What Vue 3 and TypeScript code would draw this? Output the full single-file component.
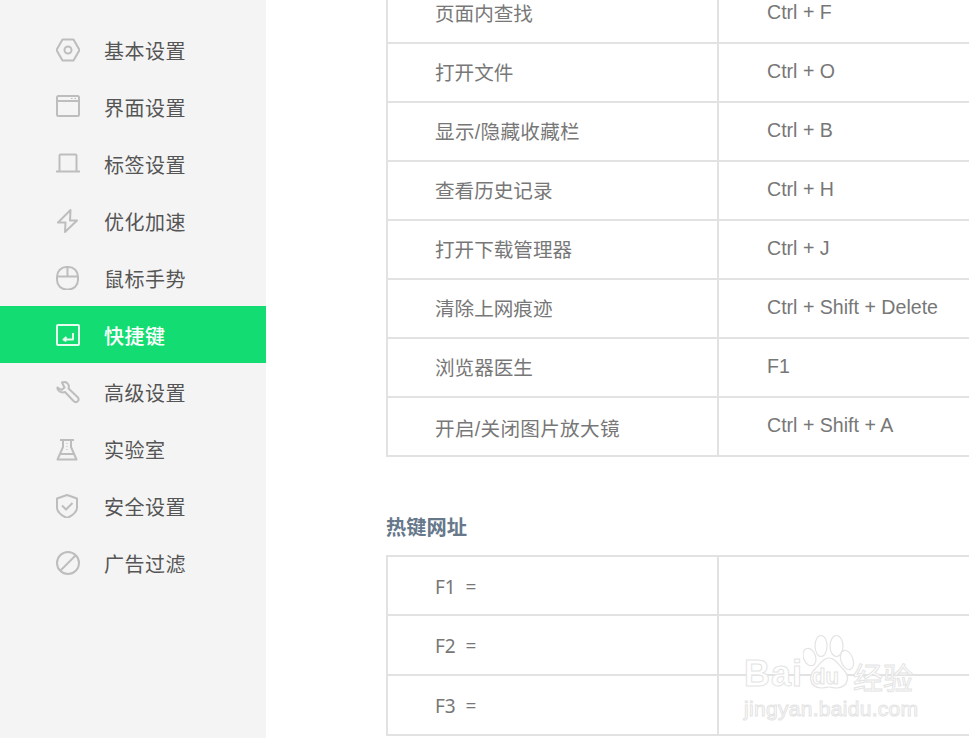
<script setup lang="ts">
const nav = [
  { label: '基本设置', icon: 'hex' },
  { label: '界面设置', icon: 'window' },
  { label: '标签设置', icon: 'laptop' },
  { label: '优化加速', icon: 'bolt' },
  { label: '鼠标手势', icon: 'mouse' },
  { label: '快捷键', icon: 'enter', active: true },
  { label: '高级设置', icon: 'wrench' },
  { label: '实验室', icon: 'flask' },
  { label: '安全设置', icon: 'shield' },
  { label: '广告过滤', icon: 'ban' },
]
const shortcuts = [
  ['页面内查找', 'Ctrl + F'],
  ['打开文件', 'Ctrl + O'],
  ['显示/隐藏收藏栏', 'Ctrl + B'],
  ['查看历史记录', 'Ctrl + H'],
  ['打开下载管理器', 'Ctrl + J'],
  ['清除上网痕迹', 'Ctrl + Shift + Delete'],
  ['浏览器医生', 'F1'],
  ['开启/关闭图片放大镜', 'Ctrl + Shift + A'],
]
const hotkeys = ['F1', 'F2', 'F3']
</script>

<template>
  <div class="page">
    <aside class="sidebar">
      <ul class="nav">
        <li v-for="item in nav" :key="item.label" class="nav-item" :class="{ active: item.active }">
          <svg class="icon" width="24" height="24" viewBox="0 0 24 24" fill="none">
            <template v-if="item.icon === 'hex'">
              <path d="M6.500 1.500h11L23.500 12l-6 10.500h-11L.5 12z" />
              <circle cx="12" cy="12" r="3.500" />
            </template>
            <template v-else-if="item.icon === 'window'">
              <rect x="1" y="1" width="22" height="20" rx="1.500" />
              <path d="M1 6h22" />
              <path class="thin" d="M15 3.500h1.500M18.500 3.500H20" />
            </template>
            <template v-else-if="item.icon === 'laptop'">
              <path d="M3.500 19V3.500a1 1 0 0 1 1-1h15a1 1 0 0 1 1 1V19" />
              <path d="M0 19.500h24" />
            </template>
            <template v-else-if="item.icon === 'bolt'">
              <path d="M14.500 1L2 13.500h7.500L9 23l12-11.500h-7z" />
            </template>
            <template v-else-if="item.icon === 'mouse'">
              <rect x="1" y="1" width="21" height="22.500" rx="9.500" />
              <path d="M1 10.500h21M11.500 1v9.500" />
            </template>
            <template v-else-if="item.icon === 'enter'">
              <rect x="1" y="2" width="22" height="20" rx="1" />
              <path d="M17 10v6.500H7.500M10.500 14l-3 2.500 3 1.500" />
            </template>
            <template v-else-if="item.icon === 'wrench'">
              <path d="M1.500 7.500L5.500 10l3-2.500L6 2.500Q10 1 12 4q1.500 2 .5 4.500l9.500 9q1.500 2.500-.5 4t-4-.5l-8.500-9q-3 1-5.500-.5T1.500 7.500z" />
            </template>
            <template v-else-if="item.icon === 'flask'">
              <path d="M4 3h14M7 3v7L1.500 22.500h19L15 10V3" />
              <path d="M4 17h14" />
              <path class="thin" d="M11 6v1M11 9v1M11 12v1" />
            </template>
            <template v-else-if="item.icon === 'shield'">
              <path d="M11 1l10 3.500v9q0 6-10 10.500Q1 19.500 1 13.500v-9z" />
              <path d="M6 11.500l4 4 6.500-6.500" />
            </template>
            <template v-else>
              <circle cx="12" cy="12" r="11" />
              <path d="M4.500 19.500l15-15" />
            </template>
          </svg>
          <span class="nav-label">{{ item.label }}</span>
        </li>
      </ul>
    </aside>

    <main class="content">
      <div class="table first">
        <div v-for="row in shortcuts" :key="row[0]" class="row">
          <div class="cell name" :class="{ slash: row[0].includes('/') }">{{ row[0] }}</div>
          <div class="cell key">{{ row[1] }}</div>
        </div>
      </div>
      <h2 class="heading">热键网址</h2>
      <div class="table second">
        <div v-for="key in hotkeys" :key="key" class="row">
          <div class="cell name hot">{{ key }}&nbsp; =</div>
          <div class="cell key"></div>
        </div>
      </div>
    </main>

    <div class="watermark">
      <svg class="paw" width="52" height="54" viewBox="0 0 52 54">
        <ellipse cx="6.500" cy="22" rx="6" ry="9" transform="rotate(-20 6.500 22)" />
        <ellipse cx="18" cy="11" rx="6" ry="10.500" />
        <ellipse cx="33.500" cy="11" rx="6.500" ry="10.500" />
        <ellipse cx="44" cy="25" rx="6" ry="10" transform="rotate(-20 44 25)" />
        <path d="M26 23c6 0 9 6 14 11 7 7 6 18-6 19-4 0-6-1-8-1s-4 1-8 1c-12-1-13-12-6-19 5-5 8-11 14-11z" />
      </svg>
      <span class="wm-bai">Bai</span>
      <span class="wm-du">du</span>
      <span class="wm-jy">经验</span>
      <span class="wm-url">jingyan.baidu.com</span>
    </div>
  </div>
</template>

<style>
html, body { margin: 0; overflow: hidden; background: #fff; }
</style>

<style scoped>
.page {
  position: relative;
  display: flex;
  width: 969px;
  height: 738px;
  overflow: hidden;
  background: #fff;
  font-family: "Liberation Sans", "Noto Sans CJK SC", sans-serif;
}
.sidebar {
  flex: none;
  width: 266px;
  background: #f4f4f4;
}
.nav {
  list-style: none;
  margin: 0;
  padding: 21px 0 0;
}
.nav-item {
  display: flex;
  align-items: center;
  height: 57px;
  padding-left: 56px;
  color: #555;
}
.nav-item.active {
  background: #13dd72;
  color: #fff;
}
.icon {
  flex: none;
  stroke: #bdbdbd;
  stroke-width: 2;
  stroke-linejoin: round;
}
.active .icon { stroke: #e8fbf0; }
.thin { stroke-width: 1; }
.nav-label {
  margin-left: 24px;
  padding-top: 1px;
  font-size: 20px;
  letter-spacing: 0.5px;
}
.active .nav-label { font-weight: 500; }
.content {
  flex: 1;
  min-width: 0;
  padding-left: 120px;
  margin-top: -15px;
}
.table {
  width: 700px;
  border: solid #e2e2e2;
  border-width: 0 0 0 2px;
}
.row {
  display: flex;
  height: 59px;
  box-sizing: border-box;
  border-bottom: 2px solid #e2e2e2;
}
.second { border-top: 2px solid #e2e2e2; }
.second .row { height: 60px; }
.second .row:first-child { height: 59px; }
.cell {
  display: flex;
  align-items: center;
  box-sizing: border-box;
  color: #777;
  font-size: 19.600px;
}
.name {
  width: 331px;
  padding: 0 0 2px 47px;
  border-right: 2px solid #e2e2e2;
}
.name.slash { letter-spacing: 0.3px; }
.first .row:last-child .name { padding: 2px 0 0 47px; }
.key {
  flex: 1;
  padding: 0 0 2px 48px;
}
.name.hot {
  padding: 2px 0 0 47px;
  font-family: "Noto Sans", sans-serif;
  font-size: 19px;
}
.heading {
  margin: 58px 0 14px;
  color: #66788a;
  font-size: 20.300px;
  font-weight: 700;
  line-height: 26px;
}
.watermark {
  position: absolute;
  left: 744px;
  top: 634px;
  width: 172px;
  height: 86px;
  color: #fff;
  -webkit-text-stroke: 1px #e4e4e4;
  font-family: "Liberation Sans", sans-serif;
}
.watermark span { position: absolute; white-space: nowrap; }
.paw {
  position: absolute;
  left: 59px;
  top: 1px;
  fill: #fff;
  stroke: #e4e4e4;
  stroke-width: 1.200;
}
.wm-bai { left: 0; top: 20px; font-size: 36px; font-weight: 700; line-height: 40px; letter-spacing: 1px; }
.wm-du { left: 68px; top: 31px; font-size: 22px; font-weight: 700; line-height: 24px; }
.wm-jy { left: 109px; top: 25px; font-size: 30px; line-height: 34px; font-family: "Noto Sans CJK SC", sans-serif; }
.wm-url { left: 0; top: 63px; font-size: 21px; line-height: 24px; letter-spacing: 0.3px; }
</style>
